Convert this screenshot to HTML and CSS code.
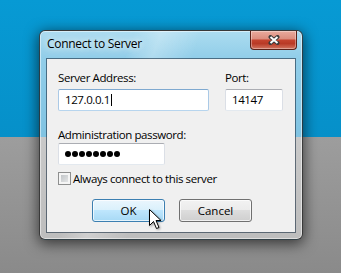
FILE: index.html
```html
<!DOCTYPE html>
<html lang="en">
<head>
    <meta charset="UTF-8">
    <meta name="viewport" content="width=device-width, initial-scale=1.0">
    <title>Connect to Server</title>
    <link rel="stylesheet" href="styles.css">
</head>
<body>
    <div class="desktop">
        <div class="window">
            <div class="titlebar">
                <span class="title">Connect to Server</span>
                <button class="close-btn" aria-label="Close">
                    <svg width="12" height="10" viewBox="0 0 12 10">
                        <path d="M2.5 2 L9.5 8 M9.5 2 L2.5 8" stroke="#3b3b3b" stroke-width="4" stroke-linecap="round"/>
                        <path d="M2.5 2 L9.5 8 M9.5 2 L2.5 8" stroke="#fff" stroke-width="2"/>
                    </svg>
                </button>
            </div>

            <div class="client">
                <div class="row">
                    <div class="field-group address">
                        <label>Server Address:</label>
                        <div class="textbox focused">127.0.0.1<span class="caret"></span></div>
                    </div>
                    <div class="field-group port">
                        <label>Port:</label>
                        <div class="textbox">14147</div>
                    </div>
                </div>

                <div class="field-group password">
                    <label>Administration password:</label>
                    <div class="textbox">
                        <span class="dot"></span><span class="dot"></span><span class="dot"></span><span class="dot"></span>
                        <span class="dot"></span><span class="dot"></span><span class="dot"></span><span class="dot"></span>
                    </div>
                </div>

                <label class="checkbox"><span class="box"></span>Always connect to this server</label>

                <div class="buttons">
                    <button class="btn hover">OK</button>
                    <button class="btn">Cancel</button>
                </div>
            </div>
        </div>

        <!-- mouse pointer over the OK button -->
        <svg class="cursor" width="14" height="21" viewBox="0 0 14 21">
            <path d="M0.5 0.5 V16.5 L4.5 12.5 L7.5 19.5 L10 18.5 L7 11.5 H12 Z" fill="#fff" stroke="#000" stroke-width="1" stroke-linejoin="miter"/>
        </svg>
    </div>
</body>
</html>
```

FILE: styles.css
```css
html, body {
    margin: 0;
    height: 100%;
}

body {
    font-family: "Segoe UI", "Open Sans", sans-serif;
    font-size: 11.5px;
    letter-spacing: -0.4px;
    color: #000;
    overflow: hidden;
    background: linear-gradient(to bottom, #079ad4 0, #0690c9 137px, #9d9d9d 137px, #8a8a8a 273px);
}

.desktop {
    position: relative;
    height: 273px;
    padding: 30px 0 0 39px;
    box-sizing: border-box;
}

.window {
    width: 264px;
    box-sizing: border-box;
    border: 1px solid rgba(0, 0, 0, 0.7);
    border-radius: 6px;
    padding: 0 6px 6px;
    background:
        linear-gradient(110deg, transparent 0 28%, rgba(255, 255, 255, 0.28) 36%, transparent 48%),
        linear-gradient(to bottom, #acdcf0 0, #92cee9 26px, #80c3e2 106px, #c9c9c9 106px, #bdbdbd 100%);
    box-shadow: 0 3px 14px 1px rgba(0, 0, 0, 0.6), inset 0 0 0 1px rgba(255, 255, 255, 0.5);
}

.titlebar {
    display: flex;
    justify-content: space-between;
    align-items: flex-start;
    height: 27px;
}

.title {
    padding: 5px 0 0 1px;
    font-size: 12px;
    letter-spacing: -0.3px;
    line-height: 15px;
    text-shadow: 0 0 6px rgba(255, 255, 255, 0.95), 0 0 12px rgba(255, 255, 255, 0.8);
}

.close-btn {
    width: 47px;
    height: 19px;
    margin-right: -1px;
    padding: 0;
    border: 1px solid #5b2219;
    border-top: none;
    border-radius: 0 0 4px 4px;
    display: flex;
    align-items: center;
    justify-content: center;
    background: linear-gradient(to bottom, #e9ab9e 0%, #dc8e7f 42%, #c4432e 52%, #b93a26 70%, #d27560 100%);
    box-shadow: inset 0 0 0 1px rgba(255, 255, 255, 0.35);
}

.client {
    background: #f0f0f0;
    background-clip: padding-box;
    border: 1px solid rgba(25, 45, 65, 0.6);
    padding: 11px 11px 10px;
}

.row {
    display: flex;
    gap: 16px;
}

.field-group label {
    display: block;
    line-height: 15px;
}

.address {
    width: 151px;
}

.port {
    width: 58px;
}

.password {
    margin-top: 16px;
}

.textbox {
    height: 22px;
    box-sizing: border-box;
    margin-top: 4px;
    padding: 0 5px 1px 6px;
    display: flex;
    align-items: center;
    background: #fff;
    border: 1px solid;
    border-color: #abadb3 #dbdfe6 #e3e9ef;
    border-radius: 2px;
}

.password .textbox {
    width: 107px;
    margin-top: 1px;
    padding-bottom: 0;
}

.textbox.focused {
    border-color: #7fa9d0 #aac9e6 #b7d5ee;
}

.caret {
    width: 1px;
    height: 12px;
    margin-left: 1px;
    background: #000;
}

.dot {
    width: 6px;
    height: 6px;
    margin-right: 1px;
    border-radius: 50%;
    background: #000;
}

.checkbox {
    margin-top: 7px;
    display: flex;
    align-items: center;
    gap: 2px;
    line-height: 13px;
}

.box {
    width: 13px;
    height: 13px;
    box-sizing: border-box;
    border: 1px solid #8e8f8f;
    background: linear-gradient(135deg, #b9bdc1, #eceded);
    box-shadow: inset 0 0 0 2px #f5f5f5;
}

.buttons {
    margin-top: 14px;
    padding-left: 2px;
    display: flex;
    justify-content: center;
    gap: 14px;
}

.btn {
    width: 73px;
    height: 23px;
    padding: 0;
    font: inherit;
    color: #000;
    border: 1px solid #707070;
    border-radius: 3px;
    background: linear-gradient(to bottom, #f2f2f2 0%, #ebebeb 50%, #dddddd 50%, #cfcfcf 100%);
    box-shadow: inset 0 0 0 1px rgba(255, 255, 255, 0.7);
}

.btn.hover {
    border-color: #3c7fb1;
    background: linear-gradient(to bottom, #eaf6fd 0%, #d9f0fc 50%, #bee6fd 50%, #a7d9f5 100%);
}

.cursor {
    position: absolute;
    left: 149px;
    top: 209px;
    filter: drop-shadow(1px 1px 1px rgba(0, 0, 0, 0.35));
}
```
